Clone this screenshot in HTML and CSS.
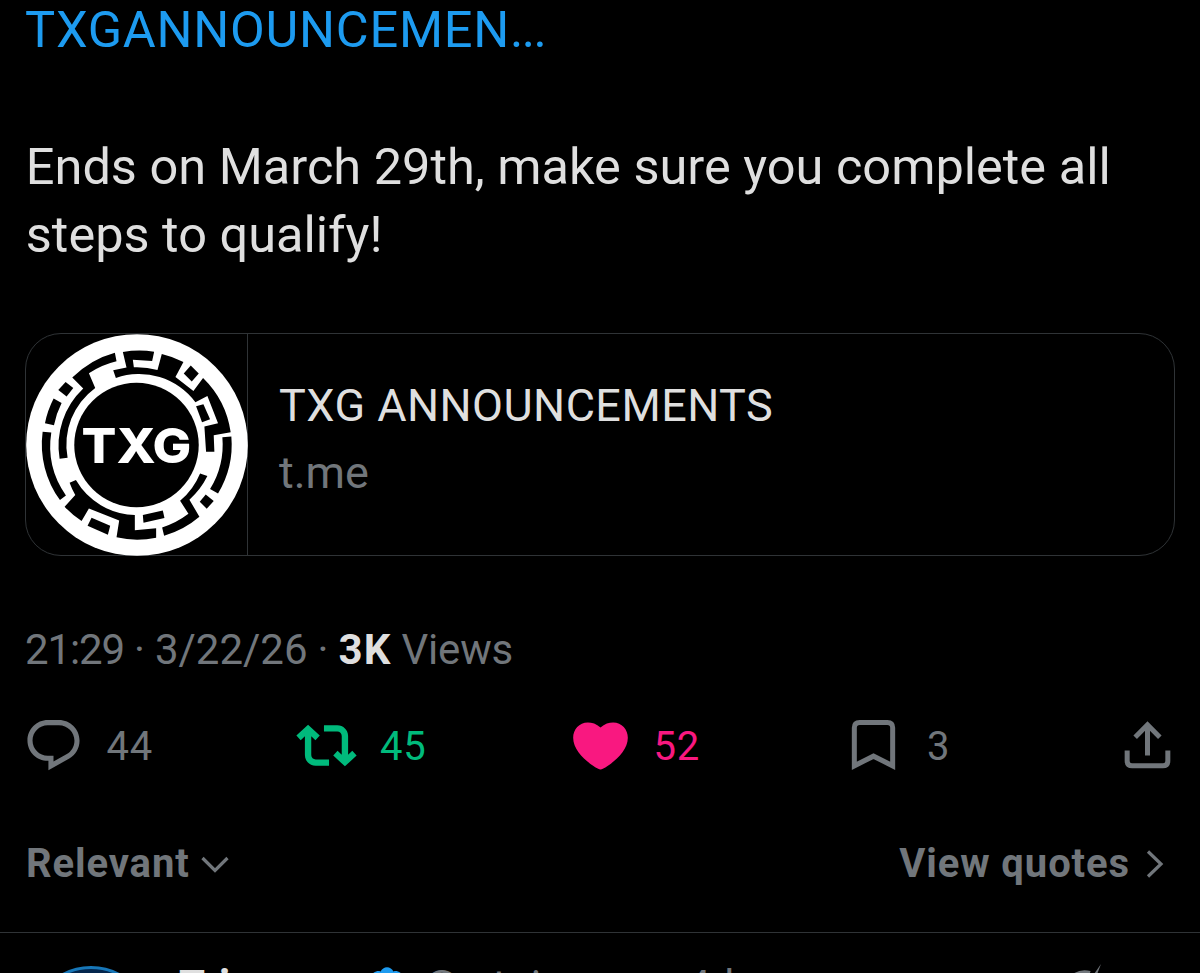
FILE: index.html
```
<!DOCTYPE html>

<html lang="en">

	<head>
		<meta charset="utf-8">
		<title>Post</title>
		<link rel="stylesheet" href="styles.css">
	</head>

	<body>

		<!-- Post -->
		<main class="post">
			<a class="link">TXGANNOUNCEMEN<span class="dots">...</span></a>
			<p class="text">Ends on March 29th, make sure you complete all<br>steps to qualify!</p>

			<div class="card">
				<div class="thumb">
					<svg class="logo" viewBox="17 16 667 667">
						<circle cx="350.5" cy="349.5" r="333" fill="#fff"/>
						<circle cx="349" cy="349.5" r="187"/>
						<path d="M67 310A285 285 0 0 0 119 515L137 501A258 258 0 0 1 93 312Z"/>
						<path d="M74 284A285 285 0 0 1 100 210L124 223A258 258 0 0 0 101 290Z"/>
						<path d="M136 160L159 178L139 204L114 184Z"/>
						<path d="M118 391A236 236 0 0 1 189 180L156 147A285 285 0 0 1 284 72L289 98A258 258 0 0 0 206 134L225 178A211 211 0 0 0 142 388Z"/>
						<path d="M308 70A285 285 0 0 1 402 69L396 97L338 93L341 116A235 235 0 0 1 412 124L425 76A285 285 0 0 1 490 100L466 145L520 187L549 148A285 285 0 0 1 632 311L581 320L583 370L558 370L553 294L594 284L562 202L526 221A211 211 0 0 0 287 148L279 125L319 117Z"/>
						<path d="M512 111L536 135L515 159L491 135Z"/>
						<path d="M528 233L550 227L570 272L546 281Z"/>
						<path d="M607 326L634 324A285 285 0 0 1 594 495L570 482A258 258 0 0 0 607 326Z"/>
						<path d="M557 498L581 518L560 541L539 520Z"/>
						<path d="M540 435L562 443A235 235 0 0 1 508 514L538 565A285 285 0 0 1 432 622L426 597A258 258 0 0 0 505 556L480 517A211 211 0 0 0 540 435Z"/>
						<path d="M368 560L428 546L433 569L370 583Z"/>
						<path d="M148 463L167 455A211 211 0 0 0 344 560L344 606L408 600L408 628A285 285 0 0 1 289 627L297 576L206 540L184 578A285 285 0 0 1 133 535L165 500A235 235 0 0 1 148 463Z"/>
						<path d="M214 568L270 592L263 619L202 592Z"/>
						<text x="184" y="404" textLength="330" lengthAdjust="spacingAndGlyphs">TXG</text>
					</svg>
				</div>
				<div class="info">
					<div class="title">TXG ANNOUNCEMENTS</div>
					<div class="domain">t.me</div>
				</div>
			</div>

			<div class="meta"><span class="time">21:29</span> · 3/22/26 · <b>3K</b> <span class="views">Views</span></div>

			<div class="actions">
				<div class="action">
					<svg class="icon" viewBox="0 0 24 24"><path d="M1.751 10c0-4.42 3.584-8 8.005-8h4.366c4.49 0 8.129 3.64 8.129 8.13 0 2.96-1.607 5.68-4.196 7.11l-8.054 4.46v-3.69h-.067c-4.49.1-8.183-3.51-8.183-8.01zm8.005-6c-3.317 0-6.005 2.69-6.005 6 0 3.37 2.77 6.08 6.138 6.01l.351-.01h1.761v2.3l5.087-2.81c1.951-1.08 3.163-3.13 3.163-5.36 0-3.39-2.744-6.13-6.129-6.13H9.756z"/></svg>
					<span class="count">44</span>
				</div>
				<div class="action reposted">
					<svg class="icon" viewBox="0 0 24 24"><path d="M4.75 3.79l4.603 4.3-1.706 1.82L6 8.38v7.37c0 .97.784 1.75 1.75 1.75H13V20H7.75c-2.347 0-4.25-1.9-4.25-4.25V8.38L1.853 9.91.147 8.09l4.603-4.3zm11.5 2.71H11V4h5.25c2.347 0 4.25 1.9 4.25 4.25v7.37l1.647-1.53 1.706 1.82-4.603 4.3-4.603-4.3 1.706-1.82L18 15.62V8.25c0-.97-.784-1.75-1.75-1.75z"/></svg>
					<span class="count">45</span>
				</div>
				<div class="action liked">
					<svg class="icon" viewBox="58.5 46.5 183 183"><path d="M150 84C138 73 124 69 112 69C86 69 68 90 68 115C68 155 110 190 143 208Q150 212 157 208C190 190 232 155 232 115C232 90 214 69 188 69C176 69 162 73 150 84Z"/></svg>
					<span class="count">52</span>
				</div>
				<div class="action">
					<svg class="icon outline" viewBox="879 46.5 183 183"><path d="M913 199V85Q913 69 929 69H1012Q1028 69 1028 85V199L970.5 170Z"/></svg>
					<span class="count">3</span>
				</div>
				<div class="action share">
					<svg class="icon outline" viewBox="709.5 46.5 183 183"><path d="M801 168V78M764 113L801 76L838 113M740 153V184Q740 199 755 199H847Q862 199 862 184V153"/></svg>
				</div>
			</div>

			<div class="sort">
				<div class="sort-item relevant"><span>Relevant</span><svg class="chevron down" viewBox="0 0 28 18"><path d="M1.5 2L14 14.500L26.500 2"/></svg></div>
				<div class="sort-item quotes"><span>View quotes</span><svg class="chevron right" viewBox="0 0 18 28"><path d="M2 1.500L15 14L2 26.500"/></svg></div>
			</div>
		</main>

		<!-- First reply, cut off by the bottom of the window -->
		<section class="reply">
			<div class="avatar"></div>
			<div class="name">Tri</div>
			<svg class="badge" viewBox="0 0 22 22"><path d="M20.396 11c-.018-.646-.215-1.275-.57-1.816-.354-.54-.852-.972-1.438-1.246.223-.607.27-1.264.14-1.897-.131-.634-.437-1.218-.882-1.687-.47-.445-1.053-.75-1.687-.882-.633-.13-1.290-.083-1.897.14-.273-.587-.704-1.086-1.245-1.440S11.647 1.620 11 1.604c-.646.017-1.273.213-1.813.568s-.969.854-1.240 1.440c-.608-.223-1.267-.272-1.902-.140-.635.130-1.220.436-1.690.882-.445.470-.749 1.055-.878 1.688-.130.633-.080 1.290.144 1.896-.587.274-1.087.705-1.443 1.245-.356.540-.555 1.170-.574 1.817.020.647.218 1.276.574 1.817z"/></svg>
			<div class="handle">@<span>tri</span></div>
			<div class="age">4d</div>
			<svg class="grok" viewBox="0 0 60 60"><path d="M8 28A19 19 0 0 1 32 13"/><path class="slash" d="M34 17L43 4L38 17Z"/></svg>
		</section>

	</body>

</html>
```
FILE: styles.css
```
* {
	box-sizing: border-box;
}

body {
	margin: 0;
	height: 973px;
	overflow: hidden;
	background-color: #000;
	color: #dfdfdf;
	font-family: Roboto, "Liberation Sans", sans-serif;
	display: flex;
	flex-direction: column;
}

svg {
	display: block;
	flex: none;
}

.post {
	height: 933px;
	flex: none;
	padding: 0 25px;
	border-bottom: 1px solid #2f3336;
	white-space: nowrap;
}

.link, .text {
	display: block;
	font-size: 50.5px;
	line-height: 68.5px;
}

.link {
	margin-top: -4.5px;
	color: #1d9bf0;
	letter-spacing: 0.75px;
}

.dots {
	letter-spacing: -1.5px;
}

.text {
	margin: 68.5px 0 0;
	padding-left: 0.8px;
}

.card {
	display: flex;
	height: 223px;
	margin-top: 63.5px;
	border: 1px solid #2f3336;
	border-radius: 36px;
}

.thumb {
	width: 222px;
	border-right: 1px solid #2f3336;
}

.logo {
	width: 222px;
	height: 222px;
}

.logo text {
	fill: #fff;
	font-family: Inter, sans-serif;
	font-size: 146px;
	font-weight: 800;
}

.info {
	padding: 38px 0 0 31px;
	font-size: 45px;
	line-height: 67px;
}

.title {
	letter-spacing: 0.45px;
}

.domain {
	color: #71767b;
}

.meta {
	margin-top: 64px;
	font-size: 42px;
	line-height: 60px;
	word-spacing: -0.5px;
	color: #71767b;
}

.meta b {
	color: #dfdfdf;
	letter-spacing: 1.2px;
}

.time {
	letter-spacing: -1.1px;
}

.views {
	letter-spacing: -0.2px;
}

.actions {
	display: grid;
	grid-template-columns: repeat(4, 273.5px) auto;
	margin: 35px -8px 0 -2.5px;
}

.action {
	display: flex;
	align-items: center;
	gap: 23px;
	font-size: 40px;
	line-height: 61px;
	color: #71767b;
}

.count {
	padding-top: 2px;
	line-height: 59px;
	letter-spacing: 0.8px;
}

.icon {
	width: 61px;
	height: 61px;
	fill: currentColor;
}

.outline {
	fill: none;
	stroke: currentColor;
	stroke-width: 15px;
}

.reposted {
	color: #00ba7c;
}

.liked {
	color: #f91880;
}

.sort {
	display: flex;
	justify-content: space-between;
	margin-top: 58px;
	padding-left: 1px;
	font-size: 40px;
	line-height: 60px;
	letter-spacing: 0.9px;
	font-weight: bold;
	color: #71767b;
}

.sort-item {
	display: flex;
	align-items: center;
}

.chevron {
	fill: none;
	stroke: currentColor;
	stroke-width: 3.2px;
}

.down {
	width: 28px;
	height: 18px;
	margin: 2px 0 0 11px;
}

.right {
	width: 18px;
	height: 28px;
	margin: 0 11px 0 16px;
}

.reply {
	display: flex;
	height: 40px;
	overflow: hidden;
	padding-left: 31px;
	font-size: 42px;
	line-height: 50px;
	color: #71767b;
}

.avatar {
	flex: none;
	width: 120px;
	height: 120px;
	margin-top: 33px;
	border: 3px solid #1777b8;
	border-radius: 50%;
	background-color: #04264d;
}

.name {
	width: 192px;
	margin: 28px 0 0 28px;
	font-weight: bold;
	color: #dfdfdf;
}

.badge {
	width: 46px;
	height: 46px;
	margin: 31px 0 0 -7px;
	fill: #1d9bf0;
}

.handle {
	width: 265px;
	margin: 28px 0 0 12px;
}

.handle span {
	margin-left: 33px;
	letter-spacing: 5px;
}

.age {
	width: 371px;
	margin-top: 28px;
}

.grok {
	width: 60px;
	height: 60px;
	margin-top: 27px;
	fill: none;
	stroke: #71767b;
	stroke-width: 4px;
}

.slash {
	fill: #71767b;
	stroke: none;
}
```
